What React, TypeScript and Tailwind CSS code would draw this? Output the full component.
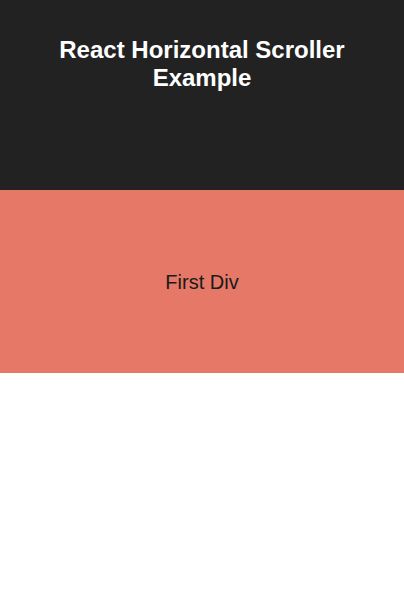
export default function App() {
  return (
    <div className="w-full" style={{ fontFamily: '"Liberation Sans", Arial, sans-serif' }}>
      <header className="flex h-[190px] justify-center bg-[#222222] px-8 pt-[36px]">
        <h1 className="text-center text-[24px] font-bold leading-[28px] text-white">
          React Horizontal Scroller Example
        </h1>
      </header>
      <div className="flex h-[183px] items-center justify-center bg-[#e57866]">
        <span className="text-[20px] text-[#1a1a1a]">First Div</span>
      </div>
    </div>
  );
}
